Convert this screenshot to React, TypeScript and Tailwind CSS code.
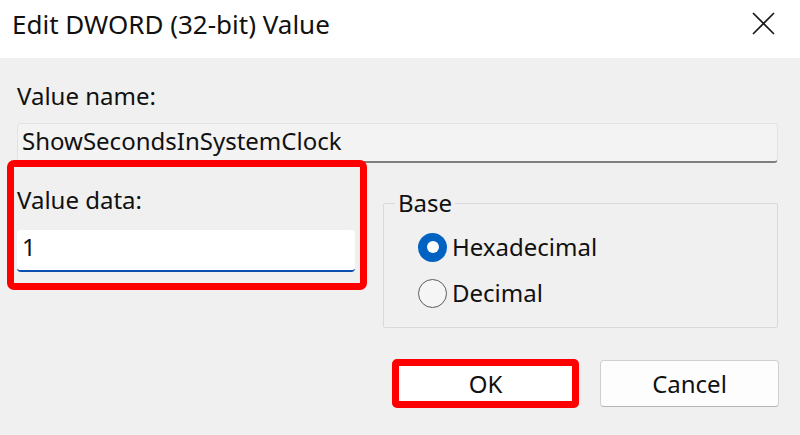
export default function App() {
  return (
    <div className="w-[800px] h-[435px] bg-[#f0f0f0] text-[#111] font-['Segoe_UI','Noto_Sans',sans-serif] flex flex-col overflow-hidden">
      {/* title bar */}
      <div className="h-[58px] shrink-0 bg-white flex items-start justify-between pl-[12px] pr-[25px] pt-[6px]">
        <span className="text-[26px] leading-[36px]">Edit DWORD (32-bit) Value</span>
        <svg className="mt-[6px]" width="23" height="23" viewBox="0 0 23 23" fill="none">
          <path d="M1 1 L22 22 M22 1 L1 22" stroke="#1a1a1a" strokeWidth="1.7" />
        </svg>
      </div>

      <div className="flex flex-col pl-[17px] pr-[22px] pt-[22px]">
        <div className="text-[24px] leading-[32px]">Value name:</div>
        <div className="mt-[11px] h-[40px] bg-[#f3f3f3] border border-[#e2e2e2] border-b-2 border-b-[#7f7f7f] rounded-[4px] flex items-center pl-[4px] pb-[3px] text-[24px] leading-[32px]">
          ShowSecondsInSystemClock
        </div>

        <div className="flex items-start">
          {/* value data */}
          <div className="relative w-[338px] shrink-0">
            <div className="mt-[21px] text-[24px] leading-[32px]">Value data:</div>
            <div className="mt-[14px] h-[42px] bg-white border-b-2 border-b-[#0a4fb0] rounded-[4px] flex items-center pl-[5px] pb-[6px] text-[24px] leading-[32px]">
              1
            </div>
            <div className="absolute -left-[10px] -right-[12px] -top-[3px] -bottom-[18px] border-[7px] border-[#ff0000] rounded-[7px] pointer-events-none" />
          </div>

          {/* base group */}
          <fieldset className="flex-1 ml-[28px] mt-[24px] border border-[#d9d9d9] rounded-[2px] pb-[18px]">
            <legend className="ml-[11px] px-[3px] text-[24px] leading-[32px]">Base</legend>
            <div className="pl-[34px] mt-[12px] flex items-center gap-[5px] h-[32px]">
              <span className="w-[29px] h-[29px] rounded-full bg-[#0063c1] flex items-center justify-center">
                <span className="w-[12px] h-[12px] rounded-full bg-white" />
              </span>
              <span className="text-[24px] leading-[32px]">Hexadecimal</span>
            </div>
            <div className="pl-[34px] mt-[14px] flex items-center gap-[5px] h-[32px]">
              <span className="w-[29px] h-[29px] rounded-full border-[1.5px] border-[#5c5c5c] bg-[#f5f5f5]" />
              <span className="text-[24px] leading-[32px]">Decimal</span>
            </div>
          </fieldset>
        </div>

        {/* buttons */}
        <div className="mt-[32px] flex justify-end gap-[25px] -mr-px">
          <div className="relative">
            <button className="w-[179px] h-[47px] bg-white border border-[#d0d0d0] rounded-[4px] text-[24px] leading-[32px]">
              OK
            </button>
            <div className="absolute -left-[4px] -right-[4px] -top-[1px] -bottom-[1px] border-[7px] border-[#ff0000] rounded-[5px] pointer-events-none" />
          </div>
          <button className="w-[179px] h-[47px] bg-[#fdfdfd] border border-[#d0d0d0] border-b-[#b5b5b5] rounded-[4px] text-[24px] leading-[32px]">
            Cancel
          </button>
        </div>
      </div>
    </div>
  );
}
